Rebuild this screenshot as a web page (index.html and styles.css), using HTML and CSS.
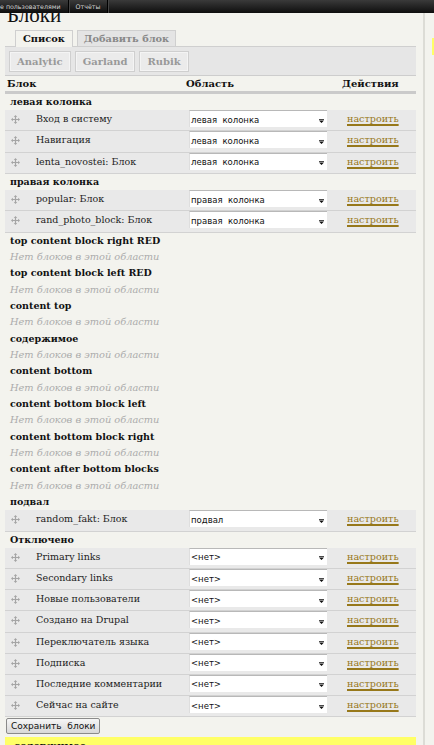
FILE: index.html
```html
<!DOCTYPE html>
<html lang="ru">
<head>
<meta charset="utf-8">
<title>Блоки</title>
<link rel="stylesheet" href="styles.css">
</head>
<body>
<div class="topbar">
  <span class="tb-item first">е пользователями</span>
  <span class="tb-item">Отчёты</span>
</div>
<div class="page">
  <div class="main">
    <h1 class="title">Блоки</h1>
    <div class="tabs">
      <span class="tab active">Список</span>
      <span class="tab">Добавить блок</span>
    </div>
    <div class="subtabs">
      <span class="subtab">Analytic</span>
      <span class="subtab">Garland</span>
      <span class="subtab">Rubik</span>
    </div>

    <div class="blocks">
      <div class="thead">
        <span class="th">Блок</span>
        <span class="th th-region">Область</span>
        <span class="th th-actions">Действия</span>
      </div>

      <div class="region">левая колонка</div>
      <div class="row"><span class="name"><svg class="handle" viewBox="0 0 9 9"><path d="M4.5 0L6.2 1.9H5.1V3.9H7.1V2.8L9 4.5L7.1 6.2V5.1H5.1V7.1H6.2L4.5 9L2.8 7.1H3.9V5.1H1.9V6.2L0 4.5L1.9 2.8V3.9H3.9V1.9H2.8Z"/></svg>Вход в систему</span><span class="select"><span class="box"><span class="val">левая&nbsp; колонка</span><svg class="arrow" viewBox="0 0 5 4"><path d="M0 0H5V0.8H0ZM0 1.4H5L2.5 4Z"/></svg></span></span><span class="act"><a class="cfg" href="#">настроить</a></span></div>
      <div class="row"><span class="name"><svg class="handle" viewBox="0 0 9 9"><path d="M4.5 0L6.2 1.9H5.1V3.9H7.1V2.8L9 4.5L7.1 6.2V5.1H5.1V7.1H6.2L4.5 9L2.8 7.1H3.9V5.1H1.9V6.2L0 4.5L1.9 2.8V3.9H3.9V1.9H2.8Z"/></svg>Навигация</span><span class="select"><span class="box"><span class="val">левая&nbsp; колонка</span><svg class="arrow" viewBox="0 0 5 4"><path d="M0 0H5V0.8H0ZM0 1.4H5L2.5 4Z"/></svg></span></span><span class="act"><a class="cfg" href="#">настроить</a></span></div>
      <div class="row"><span class="name"><svg class="handle" viewBox="0 0 9 9"><path d="M4.5 0L6.2 1.9H5.1V3.9H7.1V2.8L9 4.5L7.1 6.2V5.1H5.1V7.1H6.2L4.5 9L2.8 7.1H3.9V5.1H1.9V6.2L0 4.5L1.9 2.8V3.9H3.9V1.9H2.8Z"/></svg>lenta_novostei: Блок</span><span class="select"><span class="box"><span class="val">левая&nbsp; колонка</span><svg class="arrow" viewBox="0 0 5 4"><path d="M0 0H5V0.8H0ZM0 1.4H5L2.5 4Z"/></svg></span></span><span class="act"><a class="cfg" href="#">настроить</a></span></div>

      <div class="region">правая колонка</div>
      <div class="row"><span class="name"><svg class="handle" viewBox="0 0 9 9"><path d="M4.5 0L6.2 1.9H5.1V3.9H7.1V2.8L9 4.5L7.1 6.2V5.1H5.1V7.1H6.2L4.5 9L2.8 7.1H3.9V5.1H1.9V6.2L0 4.5L1.9 2.8V3.9H3.9V1.9H2.8Z"/></svg>popular: Блок</span><span class="select"><span class="box"><span class="val">правая&nbsp; колонка</span><svg class="arrow" viewBox="0 0 5 4"><path d="M0 0H5V0.8H0ZM0 1.4H5L2.5 4Z"/></svg></span></span><span class="act"><a class="cfg" href="#">настроить</a></span></div>
      <div class="row"><span class="name"><svg class="handle" viewBox="0 0 9 9"><path d="M4.5 0L6.2 1.9H5.1V3.9H7.1V2.8L9 4.5L7.1 6.2V5.1H5.1V7.1H6.2L4.5 9L2.8 7.1H3.9V5.1H1.9V6.2L0 4.5L1.9 2.8V3.9H3.9V1.9H2.8Z"/></svg>rand_photo_block: Блок</span><span class="select"><span class="box"><span class="val">правая&nbsp; колонка</span><svg class="arrow" viewBox="0 0 5 4"><path d="M0 0H5V0.8H0ZM0 1.4H5L2.5 4Z"/></svg></span></span><span class="act"><a class="cfg" href="#">настроить</a></span></div>

      <div class="region">top content block right RED</div>
      <div class="empty">Нет блоков в этой области</div>
      <div class="region">top content block left RED</div>
      <div class="empty">Нет блоков в этой области</div>
      <div class="region">content top</div>
      <div class="empty">Нет блоков в этой области</div>
      <div class="region">содержимое</div>
      <div class="empty">Нет блоков в этой области</div>
      <div class="region">content bottom</div>
      <div class="empty">Нет блоков в этой области</div>
      <div class="region">content bottom block left</div>
      <div class="empty">Нет блоков в этой области</div>
      <div class="region">content bottom block right</div>
      <div class="empty">Нет блоков в этой области</div>
      <div class="region">content after bottom blocks</div>
      <div class="empty">Нет блоков в этой области</div>

      <div class="region">подвал</div>
      <div class="row"><span class="name"><svg class="handle" viewBox="0 0 9 9"><path d="M4.5 0L6.2 1.9H5.1V3.9H7.1V2.8L9 4.5L7.1 6.2V5.1H5.1V7.1H6.2L4.5 9L2.8 7.1H3.9V5.1H1.9V6.2L0 4.5L1.9 2.8V3.9H3.9V1.9H2.8Z"/></svg>random_fakt: Блок</span><span class="select"><span class="box"><span class="val">подвал</span><svg class="arrow" viewBox="0 0 5 4"><path d="M0 0H5V0.8H0ZM0 1.4H5L2.5 4Z"/></svg></span></span><span class="act"><a class="cfg" href="#">настроить</a></span></div>

      <div class="region">Отключено</div>
      <div class="row"><span class="name"><svg class="handle" viewBox="0 0 9 9"><path d="M4.5 0L6.2 1.9H5.1V3.9H7.1V2.8L9 4.5L7.1 6.2V5.1H5.1V7.1H6.2L4.5 9L2.8 7.1H3.9V5.1H1.9V6.2L0 4.5L1.9 2.8V3.9H3.9V1.9H2.8Z"/></svg>Primary links</span><span class="select"><span class="box"><span class="val">&lt;нет&gt;</span><svg class="arrow" viewBox="0 0 5 4"><path d="M0 0H5V0.8H0ZM0 1.4H5L2.5 4Z"/></svg></span></span><span class="act"><a class="cfg" href="#">настроить</a></span></div>
      <div class="row"><span class="name"><svg class="handle" viewBox="0 0 9 9"><path d="M4.5 0L6.2 1.9H5.1V3.9H7.1V2.8L9 4.5L7.1 6.2V5.1H5.1V7.1H6.2L4.5 9L2.8 7.1H3.9V5.1H1.9V6.2L0 4.5L1.9 2.8V3.9H3.9V1.9H2.8Z"/></svg>Secondary links</span><span class="select"><span class="box"><span class="val">&lt;нет&gt;</span><svg class="arrow" viewBox="0 0 5 4"><path d="M0 0H5V0.8H0ZM0 1.4H5L2.5 4Z"/></svg></span></span><span class="act"><a class="cfg" href="#">настроить</a></span></div>
      <div class="row"><span class="name"><svg class="handle" viewBox="0 0 9 9"><path d="M4.5 0L6.2 1.9H5.1V3.9H7.1V2.8L9 4.5L7.1 6.2V5.1H5.1V7.1H6.2L4.5 9L2.8 7.1H3.9V5.1H1.9V6.2L0 4.5L1.9 2.8V3.9H3.9V1.9H2.8Z"/></svg>Новые пользователи</span><span class="select"><span class="box"><span class="val">&lt;нет&gt;</span><svg class="arrow" viewBox="0 0 5 4"><path d="M0 0H5V0.8H0ZM0 1.4H5L2.5 4Z"/></svg></span></span><span class="act"><a class="cfg" href="#">настроить</a></span></div>
      <div class="row"><span class="name"><svg class="handle" viewBox="0 0 9 9"><path d="M4.5 0L6.2 1.9H5.1V3.9H7.1V2.8L9 4.5L7.1 6.2V5.1H5.1V7.1H6.2L4.5 9L2.8 7.1H3.9V5.1H1.9V6.2L0 4.5L1.9 2.8V3.9H3.9V1.9H2.8Z"/></svg>Создано на Drupal</span><span class="select"><span class="box"><span class="val">&lt;нет&gt;</span><svg class="arrow" viewBox="0 0 5 4"><path d="M0 0H5V0.8H0ZM0 1.4H5L2.5 4Z"/></svg></span></span><span class="act"><a class="cfg" href="#">настроить</a></span></div>
      <div class="row"><span class="name"><svg class="handle" viewBox="0 0 9 9"><path d="M4.5 0L6.2 1.9H5.1V3.9H7.1V2.8L9 4.5L7.1 6.2V5.1H5.1V7.1H6.2L4.5 9L2.8 7.1H3.9V5.1H1.9V6.2L0 4.5L1.9 2.8V3.9H3.9V1.9H2.8Z"/></svg>Переключатель языка</span><span class="select"><span class="box"><span class="val">&lt;нет&gt;</span><svg class="arrow" viewBox="0 0 5 4"><path d="M0 0H5V0.8H0ZM0 1.4H5L2.5 4Z"/></svg></span></span><span class="act"><a class="cfg" href="#">настроить</a></span></div>
      <div class="row"><span class="name"><svg class="handle" viewBox="0 0 9 9"><path d="M4.5 0L6.2 1.9H5.1V3.9H7.1V2.8L9 4.5L7.1 6.2V5.1H5.1V7.1H6.2L4.5 9L2.8 7.1H3.9V5.1H1.9V6.2L0 4.5L1.9 2.8V3.9H3.9V1.9H2.8Z"/></svg>Подписка</span><span class="select"><span class="box"><span class="val">&lt;нет&gt;</span><svg class="arrow" viewBox="0 0 5 4"><path d="M0 0H5V0.8H0ZM0 1.4H5L2.5 4Z"/></svg></span></span><span class="act"><a class="cfg" href="#">настроить</a></span></div>
      <div class="row"><span class="name"><svg class="handle" viewBox="0 0 9 9"><path d="M4.5 0L6.2 1.9H5.1V3.9H7.1V2.8L9 4.5L7.1 6.2V5.1H5.1V7.1H6.2L4.5 9L2.8 7.1H3.9V5.1H1.9V6.2L0 4.5L1.9 2.8V3.9H3.9V1.9H2.8Z"/></svg>Последние комментарии</span><span class="select"><span class="box"><span class="val">&lt;нет&gt;</span><svg class="arrow" viewBox="0 0 5 4"><path d="M0 0H5V0.8H0ZM0 1.4H5L2.5 4Z"/></svg></span></span><span class="act"><a class="cfg" href="#">настроить</a></span></div>
      <div class="row"><span class="name"><svg class="handle" viewBox="0 0 9 9"><path d="M4.5 0L6.2 1.9H5.1V3.9H7.1V2.8L9 4.5L7.1 6.2V5.1H5.1V7.1H6.2L4.5 9L2.8 7.1H3.9V5.1H1.9V6.2L0 4.5L1.9 2.8V3.9H3.9V1.9H2.8Z"/></svg>Сейчас на сайте</span><span class="select"><span class="box"><span class="val">&lt;нет&gt;</span><svg class="arrow" viewBox="0 0 5 4"><path d="M0 0H5V0.8H0ZM0 1.4H5L2.5 4Z"/></svg></span></span><span class="act"><a class="cfg" href="#">настроить</a></span></div>
    </div>

    <button class="save" type="button">Сохранить&nbsp; блоки</button>
    <div class="demo">содержимое</div>
  </div>
  <div class="vline"></div>
  <div class="rightcol"><div class="ystrip"></div></div>
</div>
</body>
</html>
```

FILE: styles.css
```css
html, body {
  margin: 0;
  height: 100%;
  overflow: hidden;
}
body {
  background: #f3f3ee;
  font-family: "DejaVu Serif", Georgia, serif;
  font-size: 9.5px;
  color: #222;
}

.topbar {
  height: 13px;
  background: linear-gradient(#3a3a3a, #0e0e0e);
  display: flex;
  align-items: center;
  font-family: "DejaVu Sans", sans-serif;
  font-size: 6.3px;
  color: #d4d4d4;
}
.tb-item {
  height: 13px;
  line-height: 13px;
  padding: 0 7px;
  border-right: 1px solid #000;
  box-shadow: 1px 0 0 #444;
}
.tb-item.first {
  padding-left: 0;
}

.page {
  display: flex;
  align-items: stretch;
  min-height: calc(100% - 13px);
}
.main {
  margin-left: 5px;
  width: 411px;
  flex: none;
}
.vline {
  margin-left: 7px;
  width: 2px;
  background: #dcdcd6;
  flex: none;
}
.rightcol {
  flex: 1;
  padding-top: 25px;
  display: flex;
  justify-content: flex-end;
}
.ystrip {
  width: 2px;
  height: 17px;
  background: #ffff66;
}

.title {
  margin: 0 0 5px 2px;
  height: 12px;
  overflow: hidden;
  font-family: "Liberation Serif", serif;
  font-weight: normal;
  font-size: 21px;
  line-height: 4px;
  padding-top: 0;
  color: #111;
}
.title::first-line {
  line-height: 4px;
}

.tabs {
  display: flex;
  gap: 4px;
  padding-left: 10px;
  height: 16px;
  border-bottom: 1px solid #cfcfcf;
  align-items: flex-end;
}
.tab {
  height: 15px;
  line-height: 15px;
  padding: 0 6px;
  border: 1px solid #cfcfcf;
  border-bottom: none;
  background: #e4e4e4;
  color: #888;
  font-weight: bold;
  font-size: 9.8px;
}
.tab.active {
  height: 16px;
  padding: 0 7px;
  background: #f3f3ee;
  color: #111;
  position: relative;
  top: 1px;
  margin-top: -1px;
}

.subtabs {
  background: #e6e6e6;
  border-bottom: 1px solid #cdcdcd;
  display: flex;
  gap: 4px;
  padding: 4px 0 0 4px;
  height: 24px;
}
.subtab {
  height: 19px;
  line-height: 19px;
  padding: 0 7px;
  border: 1px solid #cfcfcf;
  box-shadow: inset 0 0 0 1px #f4f4f4;
  background: #ebebeb;
  color: #999;
  font-weight: bold;
  font-size: 10px;
}

.blocks {
  display: grid;
  grid-template-columns: 179px 156px 1fr;
}
.thead,
.row {
  display: contents;
}
.th {
  height: 15px;
  line-height: 15px;
  padding-left: 2px;
  font-weight: bold;
  font-size: 10px;
  color: #111;
  border-bottom: 3px solid #cacaca;
}
.region {
  grid-column: 1 / -1;
  height: 16.3px;
  line-height: 16px;
  padding-left: 5px;
  font-weight: bold;
  color: #111;
}
.empty {
  grid-column: 1 / -1;
  height: 16.4px;
  line-height: 16px;
  padding-left: 5px;
  font-style: italic;
  font-size: 9.8px;
  color: #acacac;
}

.row > * {
  height: 21.2px;
  box-sizing: border-box;
  background: #e9e9e9;
  border-bottom: 1px solid #d2d2d2;
}
.name {
  display: flex;
  align-items: flex-start;
  padding: 3px 0 0 6px;
  line-height: 12px;
  color: #222;
  white-space: nowrap;
}
.handle {
  width: 9px;
  height: 9px;
  fill: #a5a5a5;
  margin: 2px 16px 0 0;
  flex: none;
}
.select {
  display: flex;
  align-items: flex-start;
  padding-left: 5px;
}
.box {
  display: flex;
  align-items: center;
  height: 17px;
  width: 138px;
  box-sizing: border-box;
  padding: 1px 3px 0 1px;
  background: #fff;
  border-top: 1px solid #b8b8b8;
  border-left: 1px solid #dedede;
  font-family: "DejaVu Sans", sans-serif;
  font-size: 8.5px;
  color: #111;
}
.val {
  flex: 1;
}
.arrow {
  width: 5px;
  height: 4px;
  fill: #111;
  margin-top: 2px;
  flex: none;
}
.act {
  padding: 3px 0 0 7px;
  line-height: 12px;
}
.cfg {
  color: #97781a;
  font-size: 9.6px;
  text-decoration: underline;
  text-decoration-thickness: 1.6px;
  text-underline-offset: 1.5px;
}

.save {
  display: block;
  margin: 1px 0 0 1px;
  height: 16px;
  padding: 0 4px;
  font-family: "DejaVu Sans", sans-serif;
  font-size: 9px;
  color: #111;
  background: linear-gradient(#f6f6f6, #d8d8d8);
  border: 1px solid #8a8a8a;
  border-radius: 2px;
  line-height: 14px;
}
.demo {
  margin-top: 3px;
  height: 30px;
  background: #ffff66;
  padding-left: 9px;
  font-weight: bold;
  font-size: 10px;
  line-height: 13px;
  padding-top: 2px;
  color: #111;
}
```
